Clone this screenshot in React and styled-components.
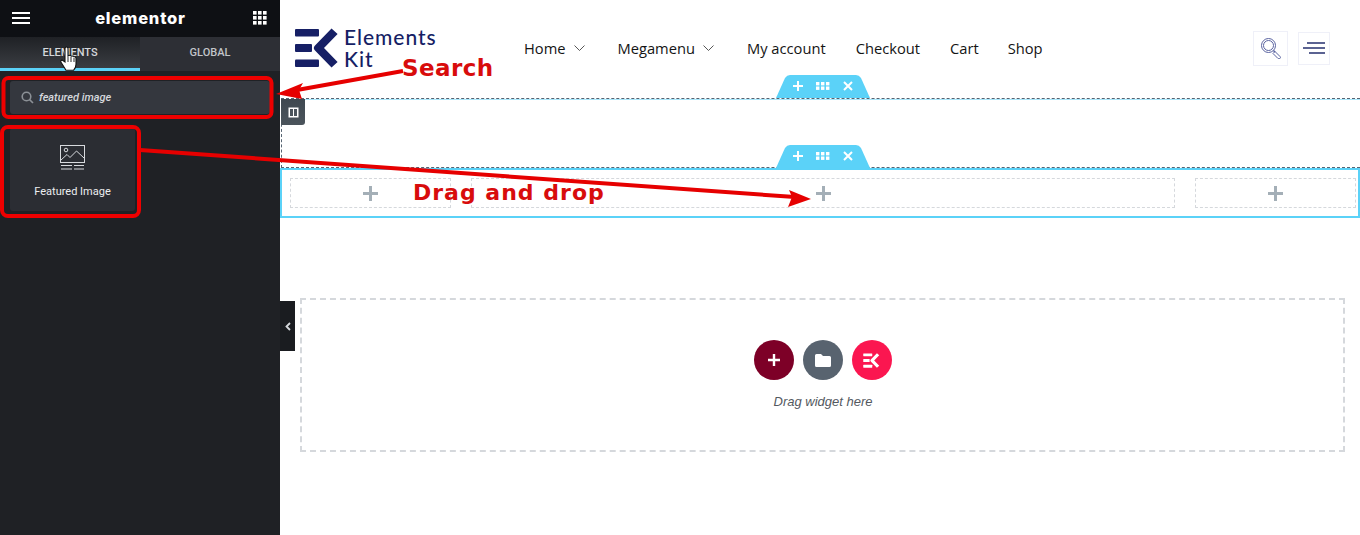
import React from "react";
import styled, { createGlobalStyle } from "styled-components";

const Global = createGlobalStyle`
  html, body { margin: 0; padding: 0; background: #fff; }
  body { font-family: "Roboto", "Liberation Sans", sans-serif; }
  * { box-sizing: border-box; }
`;

const Page = styled.div`
  position: relative;
  width: 1360px;
  height: 535px;
  overflow: hidden;
  display: flex;
`;

/* ---------- sidebar ---------- */
const Sidebar = styled.aside`
  width: 280px;
  flex: none;
  background: #1f2125;
  display: flex;
  flex-direction: column;
`;
const TopBar = styled.div`
  height: 37px;
  background: #0e1014;
  display: flex;
  align-items: center;
  justify-content: space-between;
  padding: 0 13px 1px 12px;
`;
const Brand = styled.div`
  font: 800 16.5px "Inter", sans-serif;
  color: #fff;
  letter-spacing: 0.8px;
  margin-right: 2px;
`;
const Tabs = styled.div`
  display: grid;
  grid-template-columns: 1fr 1fr;
  height: 34px;
`;
const Tab = styled.div`
  display: flex;
  align-items: center;
  justify-content: center;
  padding-bottom: ${(p) => (p.$active ? "1px" : "4px")};
  font: 500 11px "Roboto", sans-serif;
  color: ${(p) => (p.$active ? "#d5d8dc" : "#c2c5c9")};
  background: ${(p) =>
    p.$active ? "linear-gradient(#1f2125, #3a3d42)" : "#2d2f35"};
  border-bottom: ${(p) => (p.$active ? "3px solid #5bd2f8" : "0")};
`;
const SearchWrap = styled.div`
  padding: 10px 10px 0;
`;
const SearchBox = styled.div`
  height: 33px;
  background: #34373e;
  border-radius: 3px;
  display: flex;
  align-items: center;
  gap: 5px;
  padding-left: 11px;
  font: italic 500 11px "Roboto", sans-serif;
  color: #d5d8dc;
`;
const CardGrid = styled.div`
  padding: 14px 10px 0;
`;
const Card = styled.div`
  width: 125px;
  height: 83px;
  background: #2b2d33;
  border-radius: 3px;
  display: flex;
  flex-direction: column;
  align-items: center;
  padding-top: 17px;
  gap: 15px;
  font: 400 11px "Roboto", sans-serif;
  color: #eceef0;
`;

/* ---------- canvas ---------- */
const Canvas = styled.main`
  flex: 1;
  min-width: 0;
  display: flex;
  flex-direction: column;
`;
const SiteHeader = styled.header`
  height: 98px;
  display: flex;
  align-items: center;
  padding: 0 30px 2px 15px;
`;
const Logo = styled.div`
  display: flex;
  align-items: center;
  gap: 5px;
  width: 229px;
  color: #161f65;
`;
const LogoText = styled.div`
  font: 500 21px/22px "Lato", sans-serif;
  letter-spacing: 0.95px;
`;
const Nav = styled.nav`
  display: flex;
  align-items: center;
  flex: 1;
`;
const NavItem = styled.div`
  display: flex;
  align-items: center;
  gap: 8px;
  margin-right: ${(p) => p.$gap}px;
  font: 400 14.7px "Open Sans", sans-serif;
  color: #141414;
`;
const IconBox = styled.div`
  width: ${(p) => p.$w}px;
  height: ${(p) => p.$h}px;
  margin-left: ${(p) => p.$ml || 0}px;
  border: 1px solid #eff0f8;
  display: flex;
  align-items: center;
  justify-content: center;
`;

const Section = styled.section`
  position: relative;
  height: 70px;
  margin-left: 1px;
  border-top: 1px dashed #566472;
  border-left: 1px dashed #566472;
  border-bottom: 1px dashed #566472;
  box-shadow: inset 0 1px 0 #a9e7fb;
`;
const ColumnTag = styled.div`
  position: absolute;
  left: -1px;
  top: 0;
  width: 24px;
  height: 26px;
  background: linear-gradient(#3f4850, #4b545c);
  border-radius: 0 0 3px 0;
  display: flex;
  align-items: center;
  justify-content: center;
`;
const Handle = styled.div`
  position: absolute;
  left: 494px;
  top: ${(p) => p.$top}px;
  width: 94px;
  height: 23px;
  background: #5bd2f8;
  clip-path: path("M0 23 L9 3 Q11 0 14 0 L80 0 Q83 0 85 3 L94 23 Z");
  display: flex;
  align-items: center;
  justify-content: center;
  gap: 13px;
  padding-bottom: 1px;
`;
const ColumnsSection = styled.section`
  position: relative;
  height: 50px;
  border: 2px solid #5bd2f8;
  padding: 8px 2px 8px 8px;
  display: grid;
  grid-template-columns: 161px 1fr 161px;
  gap: 20px;
`;
const Column = styled.div`
  border: 1px dashed #d5d8dc;
  display: flex;
  align-items: center;
  justify-content: center;
`;
const DropZone = styled.div`
  margin: 80px 15px 0 20px;
  height: 154px;
  border: 2px dashed #d5d8dc;
  display: flex;
  flex-direction: column;
  align-items: center;
  padding-top: 40px;
  gap: 14px;
`;
const Round = styled.div`
  width: 40px;
  height: 40px;
  border-radius: 50%;
  background: ${(p) => p.$bg};
  display: flex;
  align-items: center;
  justify-content: center;
`;
const RoundRow = styled.div`
  display: flex;
  gap: 9px;
`;
const DropText = styled.div`
  font: italic 400 13px "Liberation Sans", sans-serif;
  color: #54595f;
  margin-left: 1px;
`;
const Collapse = styled.div`
  position: absolute;
  left: 280px;
  top: 301px;
  width: 15px;
  height: 50px;
  background: #1a1c20;
  display: flex;
  align-items: center;
  justify-content: center;
`;

/* ---------- annotations laid over the page ---------- */
const Overlay = styled.svg`
  position: absolute;
  inset: 0;
  pointer-events: none;
`;
const Note = styled.div`
  position: absolute;
  left: ${(p) => p.$x}px;
  top: ${(p) => p.$y}px;
  font: bold ${(p) => p.$size}px "DejaVu Sans", sans-serif;
  letter-spacing: ${(p) => p.$ls}px;
  color: #d80c0c;
  white-space: nowrap;
`;
const Cursor = styled.svg`
  position: absolute;
  left: 60px;
  top: 46px;
`;

/* ---------- drawings ---------- */
const Hamburger = () => (
  <svg width="18" height="12" viewBox="0 0 18 12">
    <path d="M0 1h18M0 6h18M0 11h18" stroke="#fff" strokeWidth="2" />
  </svg>
);
const AppsGrid = () => (
  <svg width="14" height="14" viewBox="0 0 14 14" fill="#fff">
    {[0, 5, 10].map((y) =>
      [0, 5, 10].map((x) => <rect key={`${x}-${y}`} x={x} y={y} width="3.6" height="3.6" />)
    )}
  </svg>
);
const SearchGlyph = () => (
  <svg width="13" height="13" viewBox="0 0 13 13" fill="none" stroke="#8b9096" strokeWidth="1.6">
    <circle cx="5.5" cy="5.5" r="4.3" />
    <path d="M8.6 8.6 12 12" />
  </svg>
);
const FeaturedImageIcon = () => (
  <svg width="25" height="25" viewBox="0 0 25 25" fill="none" stroke="#d8dade" strokeWidth="1">
    <rect x="0.5" y="0.5" width="24" height="17" />
    <circle cx="6" cy="5" r="1.8" />
    <path d="M1 15 7 9.5l3 3L16.5 6 24 13" />
    <path d="M1 20.5h11M14 20.5h10M1 24h11M14 24h10" />
  </svg>
);
const EkMark = ({ color = "#161f65", w = 44, h = 40 }) => (
  <svg width={w} height={h} viewBox="0 0 44 40" fill={color}>
    <rect x="0" y="1" width="24" height="7.5" rx="1" />
    <rect x="0" y="16" width="17" height="8" rx="1" />
    <rect x="0" y="31.5" width="24" height="7.5" rx="1" />
    <path d="M36.5 0.6 42.6 6 29 20l13.6 14-6.1 5.4L20 22.6a3.6 3.6 0 0 1 0-5Z" />
  </svg>
);
const Chevron = () => (
  <svg width="11" height="6" viewBox="0 0 11 6" fill="none" stroke="#444" strokeWidth="0.9">
    <path d="M0.5 0.5 5.5 5.5l5-5" />
  </svg>
);
const PlusGlyph = ({ size = 10, color = "#fff", sw = 2 }) => (
  <svg width={size} height={size} viewBox="0 0 10 10" fill="none" stroke={color} strokeWidth={sw}>
    <path d="M5 0v10M0 5h10" />
  </svg>
);
const DotsGlyph = () => (
  <svg width="14" height="8" viewBox="0 0 14 8" fill="#fff">
    {[0, 5, 10].map((x) =>
      [0, 4.5].map((y) => <rect key={`${x}-${y}`} x={x} y={y} width="3.4" height="3.4" />)
    )}
  </svg>
);
const CloseGlyph = () => (
  <svg width="10" height="10" viewBox="0 0 10 10" fill="none" stroke="#fff" strokeWidth="2">
    <path d="M1 1l8 8M9 1l-8 8" />
  </svg>
);
const HandleIcons = () => (
  <>
    <PlusGlyph />
    <DotsGlyph />
    <CloseGlyph />
  </>
);

export default function App() {
  return (
    <Page>
      <Global />
      <Sidebar>
        <TopBar>
          <Hamburger />
          <Brand>elementor</Brand>
          <AppsGrid />
        </TopBar>
        <Tabs>
          <Tab $active>ELEMENTS</Tab>
          <Tab>GLOBAL</Tab>
        </Tabs>
        <SearchWrap>
          <SearchBox>
            <SearchGlyph />
            featured image
          </SearchBox>
        </SearchWrap>
        <CardGrid>
          <Card>
            <FeaturedImageIcon />
            Featured Image
          </Card>
        </CardGrid>
      </Sidebar>

      <Canvas>
        <SiteHeader>
          <Logo>
            <EkMark />
            <LogoText>
              Elements
              <br />
              Kit
            </LogoText>
          </Logo>
          <Nav>
            <NavItem $gap={33}>
              Home <Chevron />
            </NavItem>
            <NavItem $gap={33}>
              Megamenu <Chevron />
            </NavItem>
            <NavItem $gap={30}>My account</NavItem>
            <NavItem $gap={30}>Checkout</NavItem>
            <NavItem $gap={29}>Cart</NavItem>
            <NavItem $gap={0}>Shop</NavItem>
          </Nav>
          <IconBox $w={35} $h={35}>
            <svg width="22" height="22" viewBox="0 0 22 22" fill="none" stroke="#5a63a0">
              <circle cx="8.5" cy="8.5" r="7" strokeWidth="1" />
              <circle cx="8.5" cy="8.5" r="5" strokeWidth="1" />
              <path d="M13.5 13.5 15 15" strokeWidth="1.5" />
              <path d="M15 14.5l5 5a1 1 0 0 1-2 2l-5-5Z" strokeWidth="1" />
            </svg>
          </IconBox>
          <IconBox $w={32} $h={33} $ml={10}>
            <svg width="22" height="12" viewBox="0 0 22 12" fill="none" stroke="#26306f" strokeWidth="1.6">
              <path d="M4 1h18M0 6h22M6 11h16" />
            </svg>
          </IconBox>
        </SiteHeader>

        <Section>
          <ColumnTag>
            <svg width="11" height="11" viewBox="0 0 11 11">
              <rect x="0.5" y="0.5" width="10" height="10" fill="#fff" />
              <rect x="2" y="2" width="3" height="7" fill="#4b545c" />
              <rect x="6" y="2" width="3" height="7" fill="#4b545c" />
            </svg>
          </ColumnTag>
          <Handle $top={-24}>
            <HandleIcons />
          </Handle>
        </Section>

        <ColumnsSection>
          <Handle $top={-25}>
            <HandleIcons />
          </Handle>
          <Column>
            <PlusGlyph size={15} color="#a4afb7" />
          </Column>
          <Column>
            <PlusGlyph size={15} color="#a4afb7" />
          </Column>
          <Column>
            <PlusGlyph size={15} color="#a4afb7" />
          </Column>
        </ColumnsSection>

        <DropZone>
          <RoundRow>
            <Round $bg="#7d0027">
              <PlusGlyph size={12} />
            </Round>
            <Round $bg="#58636f">
              <svg width="16" height="13" viewBox="0 0 16 13" fill="#fff">
                <path d="M1.5 0h4.5l2 2h6.5A1.5 1.5 0 0 1 16 3.5v8a1.5 1.5 0 0 1-1.5 1.5h-13A1.5 1.5 0 0 1 0 11.5v-10A1.5 1.5 0 0 1 1.5 0Z" />
              </svg>
            </Round>
            <Round $bg="#fb1650">
              <EkMark color="#fff" w={17} h={15} />
            </Round>
          </RoundRow>
          <DropText>Drag widget here</DropText>
        </DropZone>
      </Canvas>

      <Collapse>
        <svg width="6" height="9" viewBox="0 0 6 9" fill="none" stroke="#d5d8dc" strokeWidth="1.8">
          <path d="M5 1 1.5 4.5 5 8" />
        </svg>
      </Collapse>

      <Overlay width="1360" height="535" viewBox="0 0 1360 535">
        <rect x="3.5" y="78" width="268" height="39" rx="5" fill="none" stroke="#ee0000" strokeWidth="4" />
        <rect x="2" y="127" width="137" height="89" rx="6" fill="none" stroke="#ee0000" strokeWidth="4" />
        <path d="M403 71 297 90" stroke="#e60000" strokeWidth="4" />
        <path d="M276 94 303 83 299 90 302 99Z" fill="#e60000" />
        <path d="M140 150 795 197" stroke="#e60000" strokeWidth="4" />
        <path d="M811 199 788 207 792 197 789 190Z" fill="#e60000" />
      </Overlay>
      <Note $x={402} $y={55} $size={23} $ls={0.4}>Search</Note>
      <Note $x={413} $y={180} $size={22} $ls={1}>Drag and drop</Note>
      <Cursor width="18" height="26" viewBox="0 0 18 26">
        <path
          d="M5 2.5a1.5 1.5 0 0 1 3 0V10l1-.5a1.4 1.4 0 0 1 2 .5l1 .2a1.4 1.4 0 0 1 2 .6c1-.2 2 .5 2 1.5v6c0 2.5-1.5 5-2.5 6H6c-1-1.5-3-5-5-8-.7-1 .3-2.5 1.5-2L5 16Z"
          fill="#fff"
          stroke="#111"
          strokeWidth="1.1"
        />
        <path d="M8 11v5M11 11v5M14 12v4" stroke="#111" strokeWidth="0.9" />
      </Cursor>
    </Page>
  );
}
